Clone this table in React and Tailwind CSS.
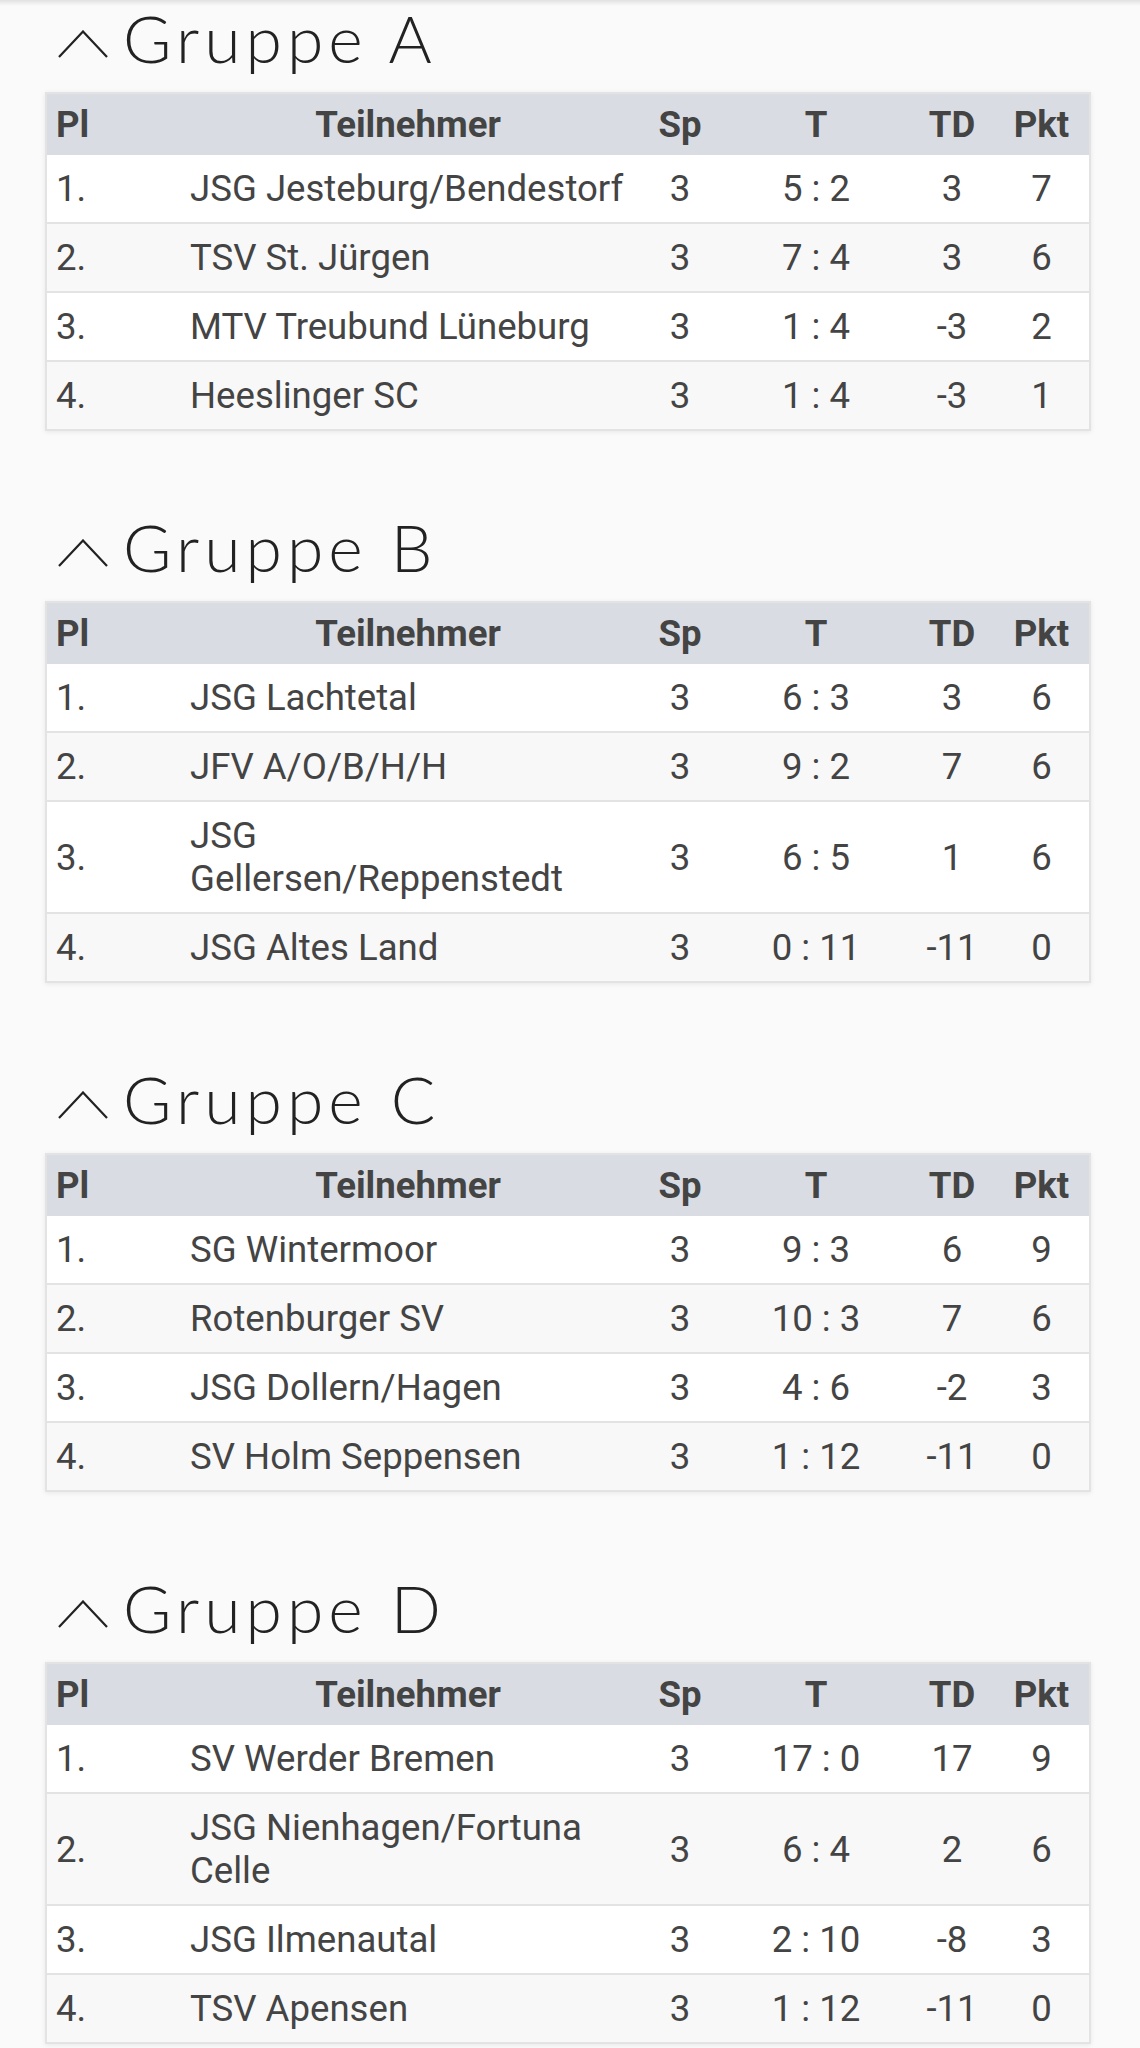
import React from 'react';

const groups = [
  {
    name: 'Gruppe A',
    rows: [
      ['1.', 'JSG Jesteburg/Bendestorf', '3', '5 : 2', '3', '7'],
      ['2.', 'TSV St. Jürgen', '3', '7 : 4', '3', '6'],
      ['3.', 'MTV Treubund Lüneburg', '3', '1 : 4', '-3', '2'],
      ['4.', 'Heeslinger SC', '3', '1 : 4', '-3', '1'],
    ],
  },
  {
    name: 'Gruppe B',
    rows: [
      ['1.', 'JSG Lachtetal', '3', '6 : 3', '3', '6'],
      ['2.', 'JFV A/O/B/H/H', '3', '9 : 2', '7', '6'],
      ['3.', 'JSG Gellersen/Reppenstedt', '3', '6 : 5', '1', '6'],
      ['4.', 'JSG Altes Land', '3', '0 : 11', '-11', '0'],
    ],
  },
  {
    name: 'Gruppe C',
    rows: [
      ['1.', 'SG Wintermoor', '3', '9 : 3', '6', '9'],
      ['2.', 'Rotenburger SV', '3', '10 : 3', '7', '6'],
      ['3.', 'JSG Dollern/Hagen', '3', '4 : 6', '-2', '3'],
      ['4.', 'SV Holm Seppensen', '3', '1 : 12', '-11', '0'],
    ],
  },
  {
    name: 'Gruppe D',
    rows: [
      ['1.', 'SV Werder Bremen', '3', '17 : 0', '17', '9'],
      ['2.', 'JSG Nienhagen/Fortuna Celle', '3', '6 : 4', '2', '6'],
      ['3.', 'JSG Ilmenautal', '3', '2 : 10', '-8', '3'],
      ['4.', 'TSV Apensen', '3', '1 : 12', '-11', '0'],
    ],
  },
];

const cols = 'grid grid-cols-[131px_460px_84px_188px_84px_1fr] items-center';

const Chevron = () => (
  <svg width="50" height="28" viewBox="0 0 50 28" className="mt-[24px] ml-[13px] shrink-0">
    <polyline points="1,27 25,1.5 49,27" fill="none" stroke="#222" strokeWidth="2.2" />
  </svg>
);

const GroupTable = ({ group, first }) => (
  <section className={first ? '' : 'mt-[84px]'}>
    <div className="flex items-start h-[64px] mb-[22px]">
      <Chevron />
      <h2 className="ml-[15px] text-[66px] leading-[64px] font-light tracking-[5px] text-[#222] font-['Lato',sans-serif]">
        {group.name}
      </h2>
    </div>

    <div className="border-2 border-[#e3e3e3] shadow-[0_1px_5px_rgba(0,0,0,0.08)] text-[36.6px] leading-[43px] text-[#444] font-['Roboto',sans-serif]">
      <div className={`${cols} bg-[#d9dde3] font-bold py-[9px]`}>
        <div className="pl-[9px]">Pl</div>
        <div className="text-center">Teilnehmer</div>
        <div className="text-center">Sp</div>
        <div className="text-center">T</div>
        <div className="text-center">TD</div>
        <div className="text-center">Pkt</div>
      </div>
      {group.rows.map((r, i) => (
        <div
          key={r[0]}
          className={`${cols} py-[12px] ${i > 0 ? 'border-t-2 border-[#e3e3e3]' : ''} ${i % 2 === 0 ? 'bg-white' : 'bg-[#f8f8f8]'}`}
        >
          <div className="pl-[9px]">{r[0]}</div>
          <div className="pl-[12px] pr-[8px]">{r[1]}</div>
          <div className="text-center">{r[2]}</div>
          <div className="text-center">{r[3]}</div>
          <div className="text-center">{r[4]}</div>
          <div className="text-center">{r[5]}</div>
        </div>
      ))}
    </div>
  </section>
);

export default function App() {
  return (
    <div className="relative min-h-[2048px] bg-[#fafafa] pl-[45px] pr-[49px] pt-[6px]">
      <div className="absolute top-0 left-0 right-0 h-[6px] bg-linear-to-b from-black/10 to-transparent" />
      {groups.map((g, i) => (
        <GroupTable key={g.name} group={g} first={i === 0} />
      ))}
    </div>
  );
}
